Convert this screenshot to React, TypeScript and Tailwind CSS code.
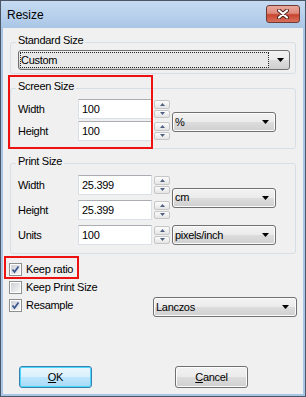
import { ReactNode } from 'react'

function Arrow() {
  return (
    <svg width="7" height="4" viewBox="0 0 7 4" className="shrink-0">
      <polygon points="0,0 7,0 3.5,4" fill="#000" />
    </svg>
  )
}

function Combo({ value, className = '' }: { value: string; className?: string }) {
  return (
    <div
      className={`flex h-[20px] items-center rounded-[3px] border border-[#707070] bg-[linear-gradient(#f2f2f2_0%,#ebebeb_50%,#dddddd_50%,#cfcfcf_100%)] pl-[2px] pr-[6px] shadow-[inset_0_0_0_1px_#fcfcfc] ${className}`}
    >
      <span className="flex-1 leading-[13px]">{value}</span>
      <Arrow />
    </div>
  )
}

function TextBox({ value }: { value: string }) {
  return (
    <div className="flex h-[20px] items-center border border-[#dbdfe6] border-t-[#abadb3] bg-white pl-[3px] leading-[13px]">
      {value}
    </div>
  )
}

function Spin() {
  return (
    <div className="flex h-[20px] flex-col gap-[1px] py-[1px]">
      <div className="flex flex-1 items-center justify-center rounded-[2px] border border-[#c6c6c6] bg-[linear-gradient(#fcfcfc,#e4e4e4)]">
        <svg width="5" height="3" viewBox="0 0 5 3">
          <polygon points="0,3 5,3 2.5,0" fill="#4e6080" />
        </svg>
      </div>
      <div className="flex flex-1 items-center justify-center rounded-[2px] border border-[#c6c6c6] bg-[linear-gradient(#fcfcfc,#e4e4e4)]">
        <svg width="5" height="3" viewBox="0 0 5 3">
          <polygon points="0,0 5,0 2.5,3" fill="#4e6080" />
        </svg>
      </div>
    </div>
  )
}

function Group({ title, className = '', children }: { title: string; className?: string; children: ReactNode }) {
  return (
    <fieldset className={`mx-[7px] rounded-[3px] border border-[#d5dfe5] pl-[7px] pr-[5px] ${className}`}>
      <legend className="-ml-[2px] px-[2px] pb-[3px] leading-[13px]">{title}</legend>
      {children}
    </fieldset>
  )
}

function Check({ checked, label }: { checked: boolean; label: string }) {
  return (
    <div className="flex h-[13px] items-center gap-[4px]">
      <div className="flex h-[13px] w-[13px] items-center justify-center border border-[#8e8f8f] bg-white p-[1px]">
        <div className="flex h-full w-full items-center justify-center bg-[linear-gradient(135deg,#cbcfd5,#f7f7f7)]">
          {checked && (
            <svg width="9" height="9" viewBox="0 0 9 9">
              <path d="M1.5 4.5 L3.5 7 L7.5 1.5" fill="none" stroke="#3f5a93" strokeWidth="1.8" />
            </svg>
          )}
        </div>
      </div>
      <span className="leading-[13px]">{label}</span>
    </div>
  )
}

function Button({ children, primary = false }: { children: ReactNode; primary?: boolean }) {
  return (
    <div
      className={`flex h-[22px] w-[73px] items-center justify-center rounded-[3px] border leading-[13px] ${
        primary
          ? 'border-[#3c7fb1] bg-[linear-gradient(#eaf6fd_0%,#d9f0fc_50%,#bee6fd_50%,#a7d9f5_100%)] shadow-[inset_0_0_0_1px_#48d8fb]'
          : 'border-[#707070] bg-[linear-gradient(#f2f2f2_0%,#ebebeb_50%,#dddddd_50%,#cfcfcf_100%)] shadow-[inset_0_0_0_1px_#fcfcfc]'
      }`}
    >
      {children}
    </div>
  )
}

export default function App() {
  return (
    <div className="flex h-[397px] w-[306px] flex-col border border-[#4b5767] bg-[#a9c5e5] font-['Liberation_Sans',Arial,sans-serif] text-[11px] tracking-[-0.3px] text-black">
      {/* title bar */}
      <div className="flex h-[27px] shrink-0 items-start bg-[linear-gradient(#c6dbf2,#aac6e6)] pl-[6px] pr-[5px]">
        <span className="mt-[7px] text-[12px] leading-[14px] tracking-normal">Resize</span>
        <div className="ml-auto mt-[4px] flex h-[18px] w-[34px] items-center justify-center rounded-[3px] border border-[#6e3a35] bg-[linear-gradient(#eaa89c_0%,#de8a7c_45%,#c9452f_55%,#d8705c_100%)]">
          <svg width="12" height="10" viewBox="0 0 12 10">
            <path d="M2 1.5 L10 8.5 M10 1.5 L2 8.5" stroke="#4a1e1a" strokeWidth="4" strokeLinecap="round" />
            <path d="M2 1.5 L10 8.5 M10 1.5 L2 8.5" stroke="#fff" strokeWidth="2.2" strokeLinecap="round" />
          </svg>
        </div>
      </div>

      {/* client area */}
      <div className="relative mx-[2px] mb-[2px] flex flex-1 flex-col bg-[#f0f0f0]">
        <Group title="Standard Size" className="mt-[6px] pb-[3px]">
          <div className="flex h-[20px] items-center rounded-[3px] border border-[#707070] bg-[linear-gradient(#f2f2f2_0%,#ebebeb_50%,#dddddd_50%,#cfcfcf_100%)]">
            <div className="ml-[1px] flex h-[16px] flex-1 items-center border border-dotted border-[#222] bg-[#e8e8e8]">
              <span className="leading-[13px]">Custom</span>
            </div>
            <div className="flex w-[20px] justify-end pr-[5px]">
              <Arrow />
            </div>
          </div>
        </Group>

        <Group title="Screen Size" className="mt-[6px] pb-[7px] pt-[3px]">
          <div className="grid grid-cols-[58px_74px_16px_104px] grid-rows-[20px_20px] items-center gap-x-[2px] gap-y-[2px]">
            <span className="leading-[13px]">Width</span>
            <TextBox value="100" />
            <Spin />
            <Combo value="%" className="row-span-2 mt-[4px]" />
            <span className="leading-[13px]">Height</span>
            <TextBox value="100" />
            <Spin />
          </div>
        </Group>

        <Group title="Print Size" className="mt-[6px] pb-[8px] pt-[4px]">
          <div className="grid grid-cols-[58px_74px_16px_104px] grid-rows-[20px_20px_20px] items-center gap-x-[2px] gap-y-[5px]">
            <span className="leading-[13px]">Width</span>
            <TextBox value="25.399" />
            <Spin />
            <Combo value="cm" className="row-span-2" />
            <span className="leading-[13px]">Height</span>
            <TextBox value="25.399" />
            <Spin />
            <span className="leading-[13px]">Units</span>
            <TextBox value="100" />
            <Spin />
            <Combo value="pixels/inch" />
          </div>
        </Group>

        <div className="ml-[6px] mr-[6px] mt-[9px] flex flex-col gap-[5px]">
          <Check checked label="Keep ratio" />
          <Check checked={false} label="Keep Print Size" />
          <div className="flex items-start">
            <Check checked label="Resample" />
            <Combo value="Lanczos" className="-mt-[2px] ml-auto w-[144px] pr-[7px]" />
          </div>
        </div>

        <div className="ml-[16px] mt-[49px] flex gap-[83px]">
          <Button primary>
            <span><span className="underline">O</span>K</span>
          </Button>
          <Button>
            <span><span className="underline">C</span>ancel</span>
          </Button>
        </div>

        {/* red annotation boxes */}
        <div className="absolute left-[5px] top-[47px] h-[74px] w-[145px] border-2 border-[#ee1111]" />
        <div className="absolute left-[1px] top-[228px] h-[23px] w-[75px] border-2 border-[#ee1111]" />
      </div>
    </div>
  )
}
